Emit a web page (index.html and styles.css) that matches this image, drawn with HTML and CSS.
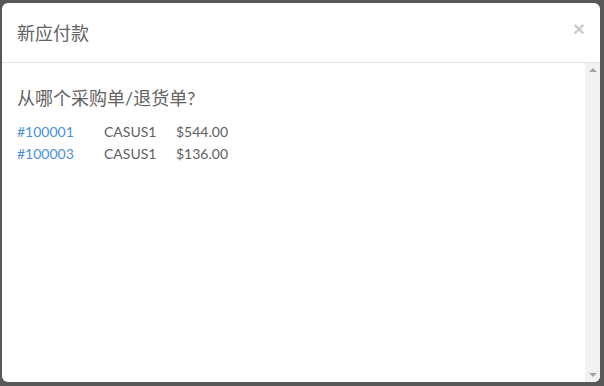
FILE: index.html
```html
<!DOCTYPE html>
<html lang="zh">
<head>
<meta charset="utf-8">
<title>新应付款</title>
<link rel="stylesheet" href="styles.css">
</head>
<body>
<div class="backdrop">
  <div class="modal">
    <div class="modal-header">
      <h4 class="modal-title">新应付款</h4>
      <button class="close" type="button">×</button>
    </div>
    <div class="modal-main">
      <div class="modal-body">
        <h3 class="question">从哪个采购单/退货单?</h3>
        <div class="orders">
          <a class="order-link" href="#">#100001</a><span>CASUS1</span><span>$544.00</span>
          <a class="order-link" href="#">#100003</a><span>CASUS1</span><span>$136.00</span>
        </div>
      </div>
      <div class="scrollbar">
        <span class="arrow arrow-up"></span>
        <span class="arrow arrow-down"></span>
      </div>
    </div>
  </div>
</div>
</body>
</html>
```
FILE: styles.css
```css
html, body {
  margin: 0;
  padding: 0;
  height: 100%;
}
body {
  background: #585858;
  font-family: Lato, "Noto Sans CJK SC", sans-serif;
  color: #606060;
  overflow: hidden;
}
.backdrop {
  padding: 3px 4px 0 2px;
}
.modal {
  width: 598px;
  height: 379px;
  background: #fff;
  border-radius: 6px;
  display: flex;
  flex-direction: column;
  overflow: hidden;
}
.modal-header {
  height: 59px;
  flex: none;
  border-bottom: 1px solid #e5e5e5;
  display: flex;
  align-items: center;
  justify-content: space-between;
  padding: 0 15px 0 15px;
}
.modal-title {
  margin: 0;
  font-size: 18px;
  font-weight: normal;
  line-height: 20px;
  color: #636363;
}
.close {
  border: 0;
  background: none;
  padding: 0;
  margin: 0 0 8px 0;
  font-family: "Liberation Sans", sans-serif;
  font-size: 21px;
  font-weight: bold;
  line-height: 1;
  color: #000;
  opacity: 0.2;
}
.modal-main {
  flex: 1;
  display: flex;
  min-height: 0;
}
.modal-body {
  flex: 1;
  padding: 25px 15px 15px;
}
.question {
  margin: 0 0 12px;
  font-size: 18px;
  font-weight: normal;
  line-height: 20px;
  color: #636363;
}
.orders {
  display: grid;
  grid-template-columns: 87px 72px auto;
  grid-auto-rows: 22px;
  align-items: center;
  font-size: 14px;
  justify-content: start;
}
.order-link {
  color: #4a90d9;
  text-decoration: none;
}
.scrollbar {
  width: 15px;
  flex: none;
  background: #f1f1f1;
  display: flex;
  flex-direction: column;
  justify-content: space-between;
  align-items: center;
  padding: 5px 0 5px;
}
.arrow {
  width: 0;
  height: 0;
  border-left: 4px solid transparent;
  border-right: 4px solid transparent;
}
.arrow-up {
  border-bottom: 4px solid #a3a3a3;
}
.arrow-down {
  border-top: 4px solid #a3a3a3;
}
```
